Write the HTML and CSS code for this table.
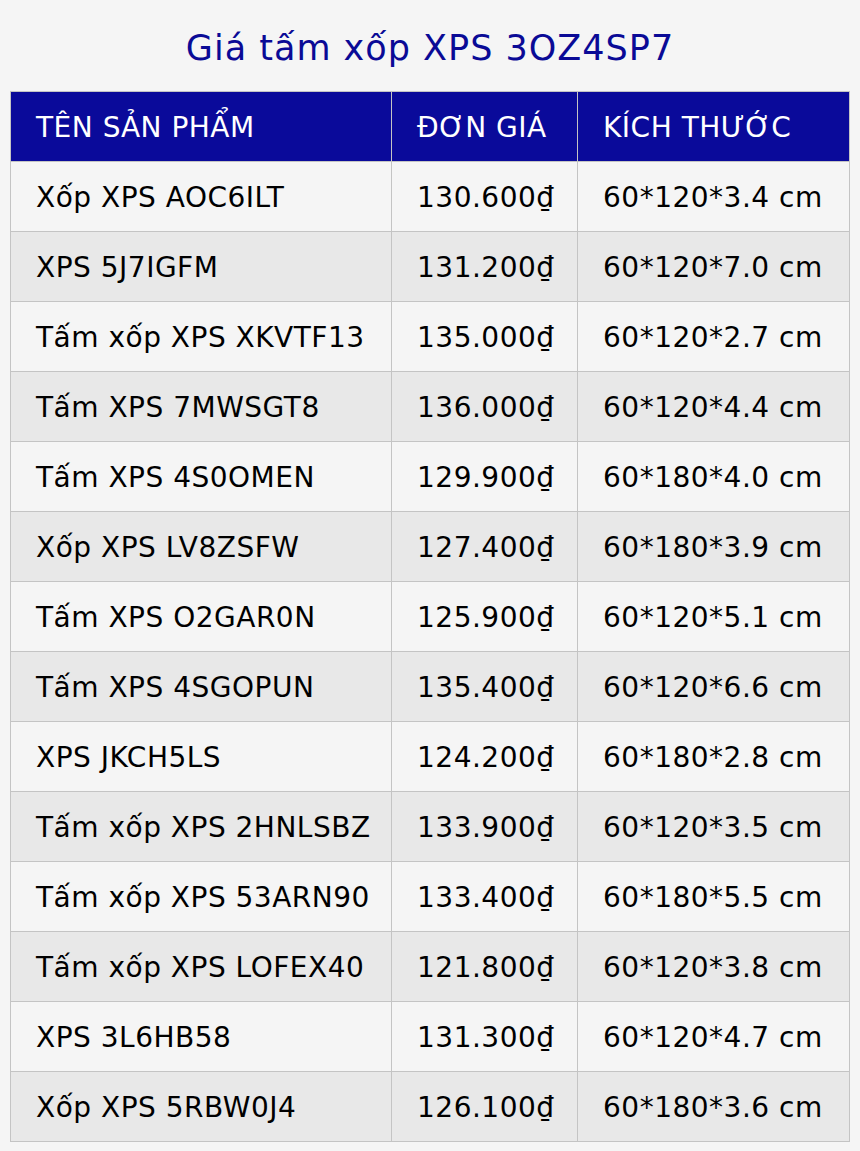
FILE: index.html
```html
<!DOCTYPE html>
<html lang="vi">
<head>
<meta charset="utf-8">
<title>Giá tấm xốp XPS 3OZ4SP7</title>
<link rel="stylesheet" href="styles.css">
</head>
<body>
<h1 class="title">Giá tấm xốp XPS 3OZ4SP7</h1>
<table class="price-table">
  <colgroup>
    <col class="c-name">
    <col class="c-price">
    <col class="c-size">
  </colgroup>
  <thead>
    <tr><th>TÊN SẢN PHẨM</th><th>ĐƠN GIÁ</th><th>KÍCH THƯỚC</th></tr>
  </thead>
  <tbody>
    <tr><td>Xốp XPS AOC6ILT</td><td>130.600₫</td><td>60*120*3.4 cm</td></tr>
    <tr><td>XPS 5J7IGFM</td><td>131.200₫</td><td>60*120*7.0 cm</td></tr>
    <tr><td>Tấm xốp XPS XKVTF13</td><td>135.000₫</td><td>60*120*2.7 cm</td></tr>
    <tr><td>Tấm XPS 7MWSGT8</td><td>136.000₫</td><td>60*120*4.4 cm</td></tr>
    <tr><td>Tấm XPS 4S0OMEN</td><td>129.900₫</td><td>60*180*4.0 cm</td></tr>
    <tr><td>Xốp XPS LV8ZSFW</td><td>127.400₫</td><td>60*180*3.9 cm</td></tr>
    <tr><td>Tấm XPS O2GAR0N</td><td>125.900₫</td><td>60*120*5.1 cm</td></tr>
    <tr><td>Tấm XPS 4SGOPUN</td><td>135.400₫</td><td>60*120*6.6 cm</td></tr>
    <tr><td>XPS JKCH5LS</td><td>124.200₫</td><td>60*180*2.8 cm</td></tr>
    <tr><td>Tấm xốp XPS 2HNLSBZ</td><td>133.900₫</td><td>60*120*3.5 cm</td></tr>
    <tr><td>Tấm xốp XPS 53ARN90</td><td>133.400₫</td><td>60*180*5.5 cm</td></tr>
    <tr><td>Tấm xốp XPS LOFEX40</td><td>121.800₫</td><td>60*120*3.8 cm</td></tr>
    <tr><td>XPS 3L6HB58</td><td>131.300₫</td><td>60*120*4.7 cm</td></tr>
    <tr><td>Xốp XPS 5RBW0J4</td><td>126.100₫</td><td>60*180*3.6 cm</td></tr>
  </tbody>
</table>
</body>
</html>
```
FILE: styles.css
```css
html, body {
  margin: 0;
  padding: 0;
  background: #f5f5f5;
}
body {
  font-family: "DejaVu Sans", Verdana, sans-serif;
  color: #000;
}
.title {
  margin: 0;
  height: 91px;
  line-height: 96px;
  text-align: center;
  font-size: 35px;
  letter-spacing: 1px;
  font-weight: normal;
  color: #0a0a96;
}
.price-table {
  margin: 0 10px;
  width: 839px;
  border-collapse: collapse;
  table-layout: fixed;
  font-size: 28px;
  letter-spacing: 0.5px;
}
.c-name { width: 381px; }
.c-price { width: 186px; }
.c-size { width: 272px; }
.price-table th,
.price-table td {
  border: 1px solid #c4c4c4;
  height: 70px;
  padding: 0 0 0 25px;
  text-align: left;
  vertical-align: middle;
  white-space: nowrap;
  box-sizing: border-box;
}
.price-table th {
  background: #0a0a9a;
  color: #fff;
  font-weight: normal;
  padding-top: 2px;
}
.price-table td {
  padding-top: 2px;
}
.price-table tbody tr:nth-child(odd) td { background: #f5f5f5; }
.price-table tbody tr:nth-child(even) td { background: #e8e8e8; }
```
